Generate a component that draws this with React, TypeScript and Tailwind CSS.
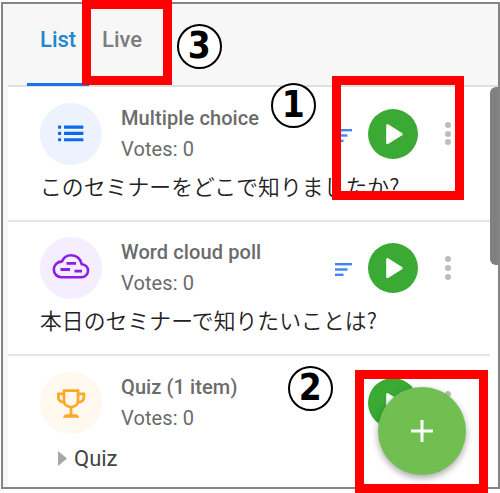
import React from "react";

function SortIcon() {
  return (
    <svg width="17" height="13" viewBox="0 0 17 13" fill="#4285f4">
      <rect width="17" height="2.4" />
      <rect y="5.3" width="12.5" height="2.4" />
      <rect y="10.6" width="8.5" height="2.4" />
    </svg>
  );
}

function ListIcon() {
  return (
    <svg width="62" height="62" viewBox="0 0 62 62" fill="#0b6bf0">
      {[22.6, 28.8, 35.2].map((y) => (
        <g key={y}>
          <rect x="18" y={y} width="3.2" height="3.1" rx=".7" />
          <rect x="24" y={y} width="19.4" height="3.1" rx=".5" />
        </g>
      ))}
    </svg>
  );
}

function CloudIcon() {
  return (
    <svg width="62" height="62" viewBox="0 0 62 62" fill="none" stroke="#8a1fe8">
      <path strokeWidth="2.6" strokeLinejoin="round" d="M21.5 40.2H41.2C45 40.2 48 37.4 48 33.7C48 30.2 45.2 27.5 41.7 27.3C40.8 22 36.6 18.3 31.3 18.3C27.2 18.3 23.6 20.6 22 24.4C17.4 24.7 13.8 28 13.8 32.5C13.8 37 17.2 40.2 21.5 40.2Z" />
      <path strokeWidth="2.8" d="M26.5 26.3H36M20.5 32.5H30M34.5 34.1H42" />
    </svg>
  );
}

function TrophyIcon() {
  return (
    <svg width="62" height="62" viewBox="0 0 62 62" fill="none" stroke="#ffa726" strokeWidth="2.7">
      <path d="M24 18.7H38V28.5C38 32.5 35 35 31 35S24 32.5 24 28.5Z" />
      <path d="M24 21.8H18.4V25.5C18.4 28.5 20.8 30.3 25 30.3M38 21.8H43.9V25.5C43.9 28.5 41.5 30.3 37 30.3" />
      <path d="M31 35V43" />
      <path d="M23.2 45.8C23.2 43.2 25.2 42.3 27 42.3H35C37 42.3 39 43.2 39 45.8Z" fill="#ffa726" stroke="none" />
    </svg>
  );
}

type RowProps = {
  title: string;
  tint: string;
  icon: React.ReactNode;
  sort?: boolean;
  children: React.ReactNode;
};

function PollRow({ title, tint, icon, sort = true, children }: RowProps) {
  return (
    <div className="h-[134.6px] shrink-0 border-b-2 border-[#e5e5e5] pl-8 pt-[15.5px]">
      <div className="flex h-[62px] items-center">
        <div className={`size-[62px] shrink-0 rounded-full ${tint}`}>{icon}</div>
        <div className="ml-[19px] w-[214px] whitespace-nowrap text-[20px] leading-[31px] tracking-[0.1px] text-[#6b6b6b]">
          <div className="font-medium">{title}</div>
          <div>Votes: 0</div>
        </div>
        <div className="mt-[3px] w-[33px]">{sort && <SortIcon />}</div>
        <div className="size-[50px] shrink-0 rounded-full bg-[#3aaa35]">
          <svg width="50" height="50" viewBox="0 0 50 50" fill="#fff">
            <path d="M18.2 17V33.5Q18.2 36.2 20.5 34.8L34 26.3Q35.7 25.2 34 24L20.5 15.5Q18.2 14.2 18.2 17Z" />
          </svg>
        </div>
        <div className="ml-[26.5px] flex flex-col gap-[2.8px]">
          <i className="size-[6px] rounded-full bg-[#bdbdbd]" />
          <i className="size-[6px] rounded-full bg-[#bdbdbd]" />
          <i className="size-[6px] rounded-full bg-[#bdbdbd]" />
        </div>
      </div>
      {children}
    </div>
  );
}

function Question({ children }: { children: React.ReactNode }) {
  return <p className="mt-[5px] whitespace-nowrap font-['Noto_Sans_CJK_JP',sans-serif] text-[21.8px] font-[350] leading-8 tracking-[0.07px] text-[#222]">{children}</p>;
}

function Marker({ n, place }: { n: string; place: string }) {
  return (
    <div className={`absolute flex size-[45px] items-center justify-center rounded-full border-2 border-black bg-white pb-[3px] font-['DejaVu_Sans',sans-serif] text-[38px] font-bold leading-none text-black ${place}`}>
      <span className="scale-x-[.87]">{n}</span>
    </div>
  );
}

export default function App() {
  return (
    <div className="relative h-[493px] w-[500px] overflow-hidden bg-white pl-px pt-[2px] font-[Roboto,'Noto_Sans_CJK_JP',sans-serif]">
      <div className="flex h-[487px] w-[499px] flex-col overflow-hidden border-2 border-[#858585] bg-[#f7f7f7]">
        <nav className="ml-[5px] flex h-[83px] shrink-0 border-b-2 border-[#e0e0e0] pl-[19px] text-[22px] font-medium">
          <div className="h-[82px] w-[62px] border-b-[3px] border-[#1a73e8] pl-[13px] pt-[19px] leading-[34px] text-[#2386cb]">List</div>
          <div className="pl-[13px] pt-[19px] leading-[34px] text-[#7d7d7d]">Live</div>
        </nav>
        <main className="ml-[5px] flex min-h-0 flex-1 bg-white">
          <div className="flex w-[482px] flex-col overflow-hidden">
            <PollRow title="Multiple choice" tint="bg-[#ecf3fe]" icon={<ListIcon />}>
              <Question>このセミナーをどこで知りましたか?</Question>
            </PollRow>
            <PollRow title="Word cloud poll" tint="bg-[#f5eefe]" icon={<CloudIcon />}>
              <Question>本日のセミナーで知りたいことは?</Question>
            </PollRow>
            <PollRow title="Quiz (1 item)" tint="bg-[#fff8ee]" icon={<TrophyIcon />} sort={false}>
              <div className="mt-[9px] flex items-center pl-[18px] text-[22px] leading-8 text-[#444]">
                <svg className="mr-[7px]" width="9" height="15" viewBox="0 0 9 15" fill="#a6a6a6"><path d="M0 0L9 7.5L0 15Z" /></svg>
                Quiz
              </div>
            </PollRow>
          </div>
          <div className="h-[178px] w-[8px] rounded-l-[6px] bg-[#808080]" />
        </main>
      </div>
      <button className="absolute left-[378px] top-[387px] flex size-[88px] items-center justify-center rounded-full bg-[#70bf50] shadow-[0_3px_7px_rgba(0,0,0,0.35)]">
        <svg width="24" height="24" viewBox="0 0 24 24" stroke="#fff" strokeWidth="3"><path d="M12 1V23M1 12H23" /></svg>
      </button>
      <div className="absolute left-[82px] top-0 h-[85px] w-[90px] border-9 border-[#f00]" />
      <div className="absolute left-[332px] top-[76px] h-[124px] w-[132px] border-9 border-[#f00]" />
      <div className="absolute left-[355px] top-[370px] h-[123px] w-[133px] border-9 border-[#f00]" />
      <Marker n="1" place="left-[271px] top-[83px]" />
      <Marker n="2" place="left-[288px] top-[366px]" />
      <Marker n="3" place="left-[177px] top-[24px]" />
    </div>
  );
}
